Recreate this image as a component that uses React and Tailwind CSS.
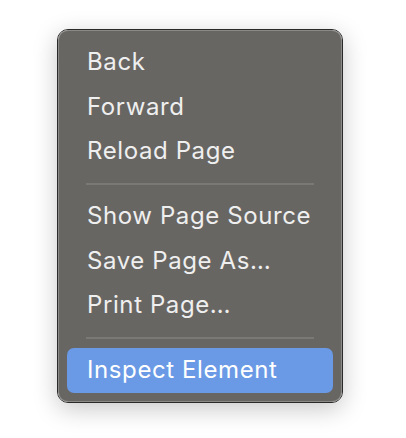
import React from "react";

const Item = ({ children, active }) => (
  <div
    className={`h-[44.5px] flex items-center pl-[20px] rounded-[7px] text-[24px] tracking-[0.6px] leading-none ${
      active ? "bg-[#6a9ae5] text-white" : "text-[#efefef]"
    }`}
  >
    {children}
  </div>
);

const Sep = () => (
  <div className="h-[20.5px] flex items-center px-[19px]">
    <div className="h-[2px] w-full bg-[#7b7976]" />
  </div>
);

export default function App() {
  return (
    <div
      className="w-[406px] h-[438px] bg-white pt-[29px] pl-[57px]"
      style={{ fontFamily: "Inter, 'Noto Sans', sans-serif" }}
    >
      <div className="w-[286px] rounded-[11px] border border-[#2a2a2a] shadow-[0_6px_24px_rgba(0,0,0,0.22)]">
        <div className="rounded-[10px] border border-[#8c8a87] bg-[#686663] px-[8px] pt-[9px] pb-[8px]">
          <Item>Back</Item>
          <Item>Forward</Item>
          <Item>Reload Page</Item>
          <Sep />
          <Item>Show Page Source</Item>
          <Item>Save Page As…</Item>
          <Item>Print Page…</Item>
          <Sep />
          <Item active>Inspect Element</Item>
        </div>
      </div>
    </div>
  );
}
